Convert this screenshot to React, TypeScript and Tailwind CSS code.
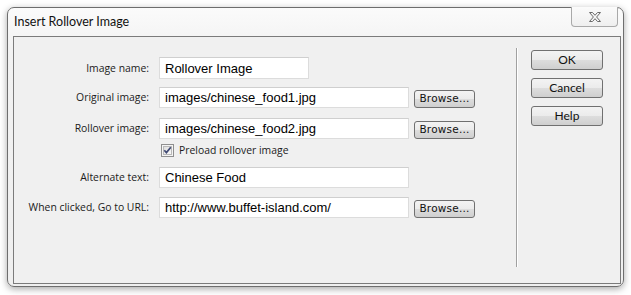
import React from "react";

const ui = { fontFamily: '"Open Sans", "Noto Sans", sans-serif' };
const lato = { fontFamily: 'Lato, "Open Sans", sans-serif' };
const field = { fontFamily: '"Liberation Sans", Arial, sans-serif' };
const tahoma = { fontFamily: '"DejaVu Sans", Verdana, sans-serif' };

function Input({ value, w }: { value: string; w: string }) {
  return (
    <div
      className={`${w} h-[21px] bg-white border border-[#dcdcdc] border-t-[#cfcfcf] flex items-center pl-[5px] text-[13px] text-black leading-none overflow-hidden whitespace-nowrap`}
      style={field}
    >
      {value}
    </div>
  );
}

function Browse() {
  return (
    <div
      className="ml-[5px] w-[61px] h-[18px] rounded-[3px] border border-[#707070] bg-[linear-gradient(#f3f3f3,#ebebeb_50%,#dddddd_51%,#cfcfcf)] flex items-center justify-center text-[10.5px] text-[#111] tracking-[0.2px]"
      style={tahoma}
    >
      Browse...
    </div>
  );
}

function Label({ text }: { text: string }) {
  return (
    <div className="w-[135px] shrink-0 text-right text-[10.4px] text-[#1b1b1b] mr-[10px] leading-none whitespace-nowrap" style={ui}>
      {text}
    </div>
  );
}

function SideButton({ text }: { text: string }) {
  return (
    <div
      className="w-[72px] h-[20px] rounded-[3px] border border-[#707070] bg-[linear-gradient(#f3f3f3,#ebebeb_50%,#dddddd_51%,#cfcfcf)] flex items-center justify-center text-[12px] text-[#111] leading-none"
      style={lato}
    >
      {text}
    </div>
  );
}

export default function App() {
  return (
    <div className="w-[631px] h-[295px] bg-white pt-[7px] pl-[7px] overflow-hidden">
      <div className="relative w-[617px] h-[280px] rounded-[7px] border border-[#6e6e6e] bg-[linear-gradient(#fbfbfb,#f2f2f2_40px,#efefef)] shadow-[0_2px_7px_rgba(0,0,0,0.35)] flex flex-col">
        {/* title bar */}
        <div className="h-[28px] flex items-center pl-[6px] pt-[1px] text-[12.5px] text-[#111]" style={lato}>
          Insert Rollover Image
        </div>
        <div className="absolute top-[-1px] right-[5px] w-[47px] h-[20px] rounded-b-[4px] border border-[#a9a9a9] border-t-0 bg-[linear-gradient(#fbfbfb,#efefef)] flex items-center justify-center">
          <svg width="14" height="12" viewBox="0 0 14 12">
            <path
              d="M1.5 1.5 H4.5 L7 4.3 L9.5 1.5 H12.5 L8.6 6 L12.5 10.5 H9.5 L7 7.7 L4.5 10.5 H1.5 L5.4 6 Z"
              fill="#f7f7f7"
              stroke="#6a6a6a"
              strokeWidth="1"
              strokeLinejoin="round"
            />
          </svg>
        </div>

        {/* client area */}
        <div className="ml-[5px] mr-[2px] h-[248px] border border-[#7b7b7b] bg-[#f0f0f0] flex">
          {/* form */}
          <div className="w-[502px] flex flex-col pt-[20px]">
            <div className="flex items-center">
              <Label text="Image name:" />
              <div className="h-[22px] w-[150px] bg-white border border-[#dcdcdc] border-t-[#cfcfcf] flex items-center pl-[5px] text-[13px] text-black leading-none" style={field}>
                Rollover Image
              </div>
            </div>
            <div className="flex items-center mt-[8px]">
              <Label text="Original image:" />
              <Input value="images/chinese_food1.jpg" w="w-[250px]" />
              <div className="self-end"><Browse /></div>
            </div>
            <div className="flex items-center mt-[10px]">
              <Label text="Rollover image:" />
              <Input value="images/chinese_food2.jpg" w="w-[250px]" />
              <div className="self-end"><Browse /></div>
            </div>
            <div className="flex items-center mt-[5px] h-[13px] pl-[147px]">
              <svg width="13" height="13" viewBox="0 0 13 13">
                <defs>
                  <linearGradient id="cb" x1="0" y1="0" x2="1" y2="1">
                    <stop offset="0" stopColor="#dcdcdc" />
                    <stop offset="1" stopColor="#fbfbfb" />
                  </linearGradient>
                </defs>
                <rect x="0.5" y="0.5" width="12" height="12" fill="#f4f4f4" stroke="#8f8f8f" />
                <rect x="2.5" y="2.5" width="8" height="8" fill="url(#cb)" stroke="#b9b9b9" />
                <path d="M3.3 6.2 L5.4 8.6 L9.8 3.2" fill="none" stroke="#404a74" strokeWidth="1.7" />
              </svg>
              <span className="ml-[5px] text-[10.4px] text-[#1b1b1b] leading-none" style={ui}>
                Preload rollover image
              </span>
            </div>
            <div className="flex items-center mt-[10px]">
              <Label text="Alternate text:" />
              <Input value="Chinese Food" w="w-[250px]" />
            </div>
            <div className="flex items-center mt-[9px]">
              <Label text="When clicked, Go to URL:" />
              <Input value="http://www.buffet-island.com/" w="w-[250px]" />
              <div className="self-end"><Browse /></div>
            </div>
          </div>
          {/* separator */}
          <div className="mt-[11px] mb-[16px] w-[1px] bg-[#a0a0a0] border-r border-white box-content" />
          {/* buttons */}
          <div className="ml-[13px] pt-[13px] flex flex-col gap-[8px]">
            <SideButton text="OK" />
            <SideButton text="Cancel" />
            <SideButton text="Help" />
          </div>
        </div>
      </div>
    </div>
  );
}
